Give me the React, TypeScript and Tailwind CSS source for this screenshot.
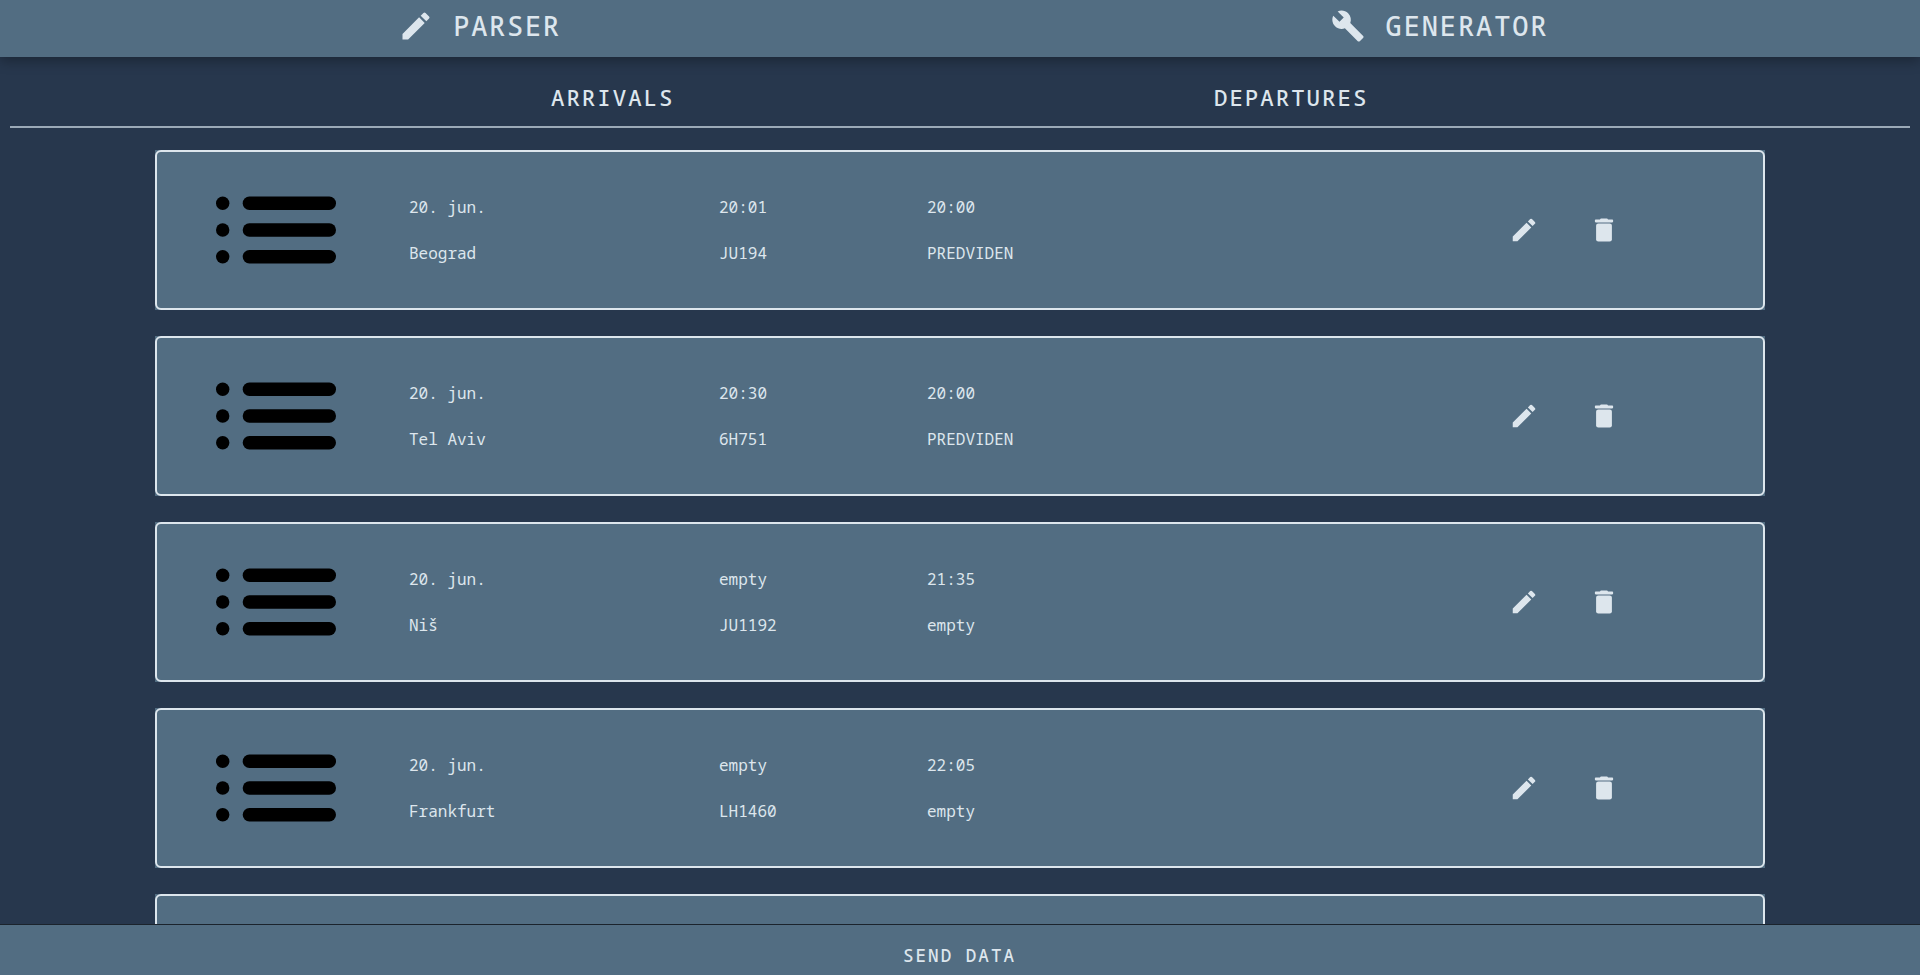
import { MdBuild, MdEdit } from "react-icons/md";

type Flight = {
  date: string;
  city: string;
  actual: string;
  code: string;
  planned: string;
  status: string;
};

const flights: Flight[] = [
  { date: "20. jun.", city: "Beograd", actual: "20:01", code: "JU194", planned: "20:00", status: "PREDVIDEN" },
  { date: "20. jun.", city: "Tel Aviv", actual: "20:30", code: "6H751", planned: "20:00", status: "PREDVIDEN" },
  { date: "20. jun.", city: "Niš", actual: "empty", code: "JU1192", planned: "21:35", status: "empty" },
  { date: "20. jun.", city: "Frankfurt", actual: "empty", code: "LH1460", planned: "22:05", status: "empty" },
];

function ListGlyph() {
  return (
    <svg className="h-[68px] w-[120px] shrink-0" viewBox="0 0 120 68" fill="#000">
      {[7.3, 34, 60.7].map((y) => (
        <g key={y}>
          <circle cx="6.7" cy={y} r="6.7" />
          <rect x="26.7" y={y - 6.7} width="93.3" height="13.4" rx="6.7" />
        </g>
      ))}
    </svg>
  );
}

function TrashGlyph() {
  return (
    <svg className="size-[30px]" viewBox="0 0 30 30" fill="currentColor">
      <path d="M12.2 3.6h5.6q.9 0 1.2 1h4.2q1 0 1 1.4t-1 1.4H6.8q-1 0-1-1.4t1-1.4H11q.3-1 1.2-1z" />
      <rect x="7.1" y="8.6" width="15.8" height="17.9" rx="2.2" />
    </svg>
  );
}

function Pair({ top, bottom, width }: { top: string; bottom: string; width: string }) {
  return (
    <div className={`flex flex-col gap-[22px] leading-6 ${width}`}>
      <p>{top}</p>
      <p>{bottom}</p>
    </div>
  );
}

function FlightCard({ flight }: { flight?: Flight }) {
  return (
    <li className="h-40 w-[1610px] shrink-0 bg-[#526d82]">
      <div className="flex h-full items-center rounded-[6px] border-2 border-[#dde6ed] pl-[59px]">
        {flight && (
          <>
            <ListGlyph />
            <div className="ml-[73px] flex">
              <Pair top={flight.date} bottom={flight.city} width="w-[310px]" />
              <Pair top={flight.actual} bottom={flight.code} width="w-[208px]" />
              <Pair top={flight.planned} bottom={flight.status} width="w-[582px]" />
            </div>
            <div className="flex gap-[50px]">
              <MdEdit size={30} />
              <TrashGlyph />
            </div>
          </>
        )}
      </div>
    </li>
  );
}

export default function App() {
  return (
    <div className="flex h-[975px] flex-col overflow-hidden bg-[#27374d] font-['Noto_Sans_Mono','DejaVu_Sans_Mono',monospace] text-base text-[#dde6ed]">
      <header className="z-10 flex h-[57px] shrink-0 bg-[#526d82] text-[27px] font-medium tracking-[1.9px] shadow-[0_4px_12px_rgba(0,0,0,0.3)]">
        <div className="flex w-[959px] items-center justify-center gap-[19px] pb-[5px]">
          <MdEdit size={36} />
          <span className="pt-px tracking-[1.7px]">PARSER</span>
        </div>
        <div className="flex flex-1 items-center justify-center gap-[21px] pb-[5px]">
          <MdBuild size={34} />
          <span className="pt-px">GENERATOR</span>
        </div>
      </header>
      <nav className="mx-[10px] flex h-[71px] shrink-0 justify-center border-b-2 border-[#9ba9b7] pt-[24px] text-[22.4px] leading-[34px] font-medium tracking-[2px]">
        <span className="w-[663px]">ARRIVALS</span>
        <span className="w-[155px]">DEPARTURES</span>
      </nav>
      <ul className="flex min-h-0 flex-1 flex-col items-center gap-[26px] overflow-hidden pt-[22px]">
        {flights.map((flight) => (
          <FlightCard key={flight.city} flight={flight} />
        ))}
        <FlightCard />
      </ul>
      <footer className="flex h-[51px] shrink-0 items-center justify-center border-t border-[#1b232c] bg-[#526d82] pt-2.5 text-[17.6px] font-medium tracking-[2px]">
        <button className="mr-px leading-6">SEND DATA</button>
      </footer>
    </div>
  );
}
